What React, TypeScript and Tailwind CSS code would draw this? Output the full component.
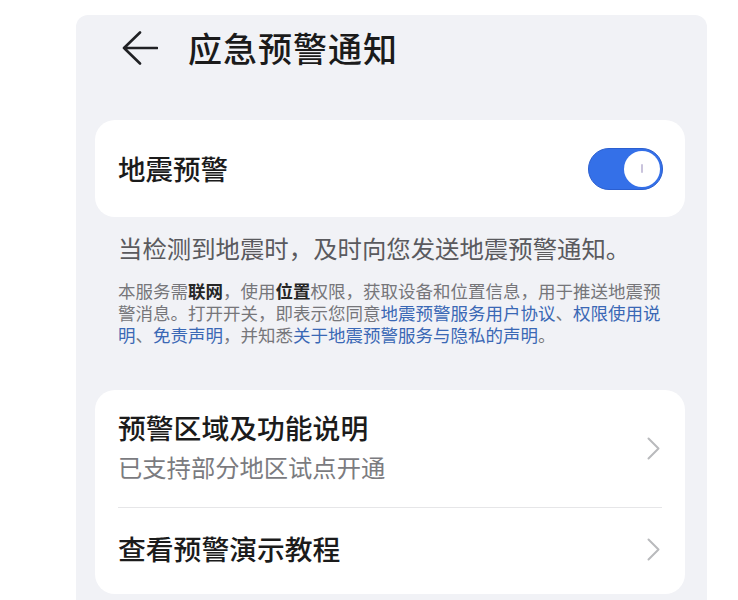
const FONT = { fontFamily: '"Noto Sans CJK SC", "Noto Sans", sans-serif' };

function BackArrow() {
  return (
    <svg width="36" height="34" viewBox="0 0 36 34" fill="none">
      <path
        d="M18 1.5 L2 17 L18 32.5 M2 17 H35"
        stroke="#202124"
        strokeWidth="2.6"
        strokeLinecap="round"
        strokeLinejoin="round"
      />
    </svg>
  );
}

function Chevron() {
  return (
    <svg width="13" height="23" viewBox="0 0 13 23" fill="none">
      <path
        d="M1.5 1.5 L11.5 11.5 L1.5 21.5"
        stroke="#b9babd"
        strokeWidth="2"
        strokeLinecap="round"
        strokeLinejoin="round"
      />
    </svg>
  );
}

function Toggle() {
  return (
    <div className="flex h-[42px] w-[75px] items-center justify-end rounded-full border border-[#2b5fd0] bg-[#3470e8] pr-[2px]">
      <div className="flex h-[36px] w-[36px] items-center justify-center rounded-full bg-white">
        <div className="h-[9px] w-[2px] rounded-full bg-[#c9c3dc]" />
      </div>
    </div>
  );
}

export default function App() {
  return (
    <div className="h-[600px] w-[738px] overflow-hidden bg-white pl-[76px] pr-[31px] pt-[15px]" style={FONT}>
      <div className="h-full rounded-t-[12px] bg-[#f1f2f6] pl-[19px] pr-[22px]">
        <div className="flex h-[66px] items-center pl-[27px]">
          <BackArrow />
          <h1 className="ml-[30px] text-[34px] font-medium leading-none tracking-[1px] text-[#1b1b1b]">
            应急预警通知
          </h1>
        </div>

        <div className="mt-[39px] flex h-[97px] items-center justify-between rounded-[20px] bg-white pl-[23px] pr-[22px]">
          <span className="text-[27.5px] font-medium text-[#1b1b1b]">地震预警</span>
          <Toggle />
        </div>

        <p className="mt-[15px] px-[23px] text-[24.4px] leading-[32px] text-[#5a5a5e]">
          当检测到地震时，及时向您发送地震预警通知。
        </p>

        <div className="mt-[16px] px-[23px] text-[17.5px] leading-[22px] text-[#76767a]">
          <span className="block whitespace-nowrap">
            本服务需<b className="font-semibold text-[#262626]">联网</b>，使用
            <b className="font-semibold text-[#262626]">位置</b>权限，获取设备和位置信息，用于推送地震预
          </span>
          <span className="block whitespace-nowrap">
            警消息。打开开关，即表示您同意
            <span className="text-[#3a68b5]">地震预警服务用户协议</span>、
            <span className="text-[#3a68b5]">权限使用说</span>
          </span>
          <span className="block whitespace-nowrap">
            <span className="text-[#3a68b5]">明</span>、
            <span className="text-[#3a68b5]">免责声明</span>，并知悉
            <span className="text-[#3a68b5]">关于地震预警服务与隐私的声明</span>。
          </span>
        </div>

        <div className="mt-[44px] rounded-[20px] bg-white">
          <div className="flex h-[117px] items-center justify-between pl-[23px] pr-[25px]">
            <div className="pb-[1px]">
              <div className="text-[27.8px] font-medium leading-[38px] text-[#1b1b1b]">预警区域及功能说明</div>
              <div className="text-[24.3px] leading-[42px] text-[#7b7b7f]">已支持部分地区试点开通</div>
            </div>
            <Chevron />
          </div>
          <div className="mx-[23px] h-px bg-[#e6e6e8]" />
          <div className="flex h-[86px] items-center justify-between pb-[4px] pl-[23px] pr-[25px]">
            <span className="text-[27.8px] font-medium text-[#1b1b1b]">查看预警演示教程</span>
            <Chevron />
          </div>
        </div>
      </div>
    </div>
  );
}
